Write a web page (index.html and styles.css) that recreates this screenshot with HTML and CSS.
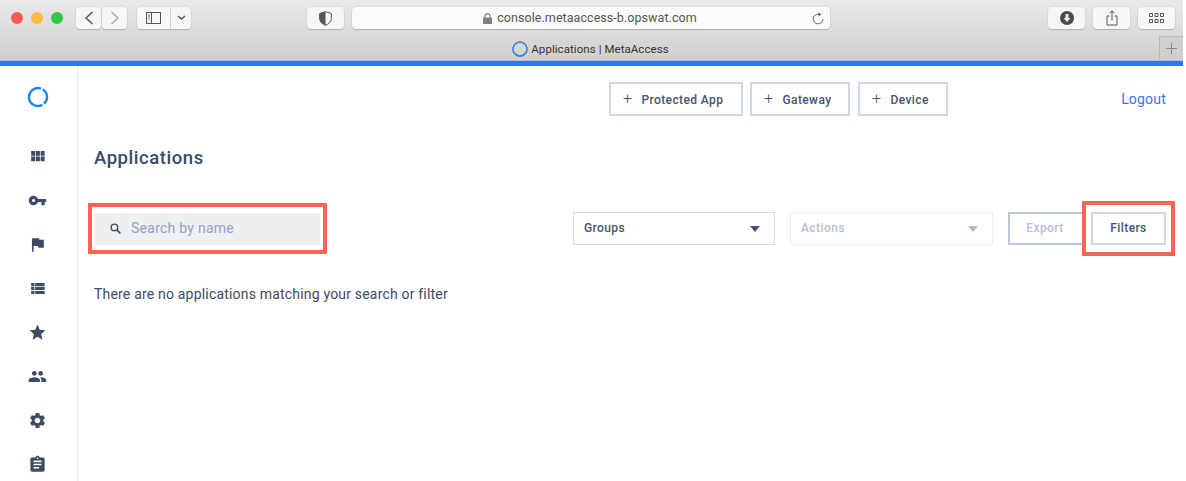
FILE: index.html
```html
<!DOCTYPE html>
<html lang="en">
<head>
<meta charset="utf-8">
<title>Applications | MetaAccess</title>
<link rel="stylesheet" href="styles.css">
</head>
<body>
<div class="browser">
  <header class="chrome">
    <div class="toolbar">
      <div class="lights"><i class="light red"></i><i class="light amber"></i><i class="light green"></i></div>
      <div class="nav-pair">
        <button class="tb tb-nav"><svg width="12" height="16" viewBox="0 0 12 16"><path d="M9.5 2 3 8l6.5 6" fill="none" stroke="#555" stroke-width="1.5"/></svg></button>
        <button class="tb tb-nav"><svg width="12" height="16" viewBox="0 0 12 16"><path d="M2.500 2 9 8l-6.500 6" fill="none" stroke="#aaa" stroke-width="1.500"/></svg></button>
      </div>
      <div class="tb tb-side">
        <span class="side-a"><svg width="16" height="12" viewBox="0 0 16 12"><rect x=".5" y=".5" width="14" height="11" fill="none" stroke="#555"/><path d="M5.500 .5v11" stroke="#555"/><path d="M2 3h2M2 5h2M2 7h2" stroke="#777"/></svg></span>
        <span class="side-b"><svg width="9" height="6" viewBox="0 0 9 6"><path d="M1 1l3.500 3L8 1" fill="none" stroke="#555" stroke-width="1.500"/></svg></span>
      </div>
      <button class="tb tb-shield"><svg width="13" height="15" viewBox="0 0 13 15"><path d="M6.500 .7 12.300 2.500V7.500C12.300 11 9.500 13.300 6.500 14.300 3.500 13.300.7 11 .7 7.500V2.500Z" fill="none" stroke="#555"/><path d="M6.500 .7V14.300C3.500 13.300.7 11 .7 7.500V2.500Z" fill="#555"/></svg></button>
      <div class="url">
        <span class="url-text"><svg class="lock" width="9" height="11" viewBox="0 0 9 11"><path d="M2 5V3.200a2.500 2.500 0 0 1 5 0V5" fill="none" stroke="#808080" stroke-width="1.200"/><rect y="4.500" width="9" height="6.500" rx=".6" fill="#808080"/></svg>console.metaaccess-b.opswat.com</span>
        <svg class="reload" width="12" height="13" viewBox="0 0 12 13"><path d="M7 2.300A4.800 4.800 0 1 0 10.800 7" fill="none" stroke="#666"/><path d="M6.500 .2 9.500 2.400 6.500 4.400Z" fill="#666"/></svg>
      </div>
      <button class="tb tb-act"><svg width="14" height="14" viewBox="0 0 14 14"><circle cx="7" cy="7" r="7" fill="#4a4a4a"/><path d="M5.500 3h3v4h2L7 11 3.500 7h2Z" fill="#eee"/></svg></button>
      <button class="tb tb-act"><svg width="12" height="16" viewBox="0 0 12 16"><path d="M3.500 6H1v9h10V6H8.500M6 10.500V1M3.500 3.200 6 .8l2.500 2.400" fill="none" stroke="#555"/></svg></button>
      <button class="tb tb-act"><svg width="15" height="10" viewBox="0 0 15 10"><path d="M.5.500h3v3h-3zM6 .500h3v3H6zM11.500.500h3v3h-3zM.5 6.500h3v3h-3zM6 6.500h3v3H6zM11.500 6.500h3v3h-3z" fill="none" stroke="#555"/></svg></button>
    </div>
    <div class="tabbar">
      <div class="tab-title"><svg width="16" height="16" viewBox="0 0 16 16"><path d="M10.500 1.500A7 7 0 1 1 5.500 1.500" fill="none" stroke="#2b7de0" stroke-width="1.500"/><path d="M5.500 1.500A7 7 0 0 1 10.500 1.500" fill="none" stroke="#5b6f90" stroke-width="1.500"/></svg><span>Applications | MetaAccess</span></div>
      <div class="tab-new"><svg width="13" height="13" viewBox="0 0 13 13"><path d="M6.500 1v11M1 6.500h11" stroke="#8a8a8a"/></svg></div>
    </div>
  </header>
  <div class="accent"></div>
  <div class="app">
    <aside class="sidebar">
      <svg class="logo" width="22" height="22" viewBox="0 0 22 22"><path d="M15.500 3.200A9 9 0 0 1 17 17.700M15.500 18.800A9 9 0 1 1 14.080 2.540" fill="none" stroke="#1d86ee" stroke-width="2.400"/></svg>
      <nav class="side-nav">
        <svg viewBox="0 0 24 24"><path d="M4 11h5V5H4v6zm0 7h5v-6H4v6zm6 0h5v-6h-5v6zm6 0h5v-6h-5v6zm-6-7h5V5h-5v6zm6-6v6h5V5h-5z"/></svg>
        <svg viewBox="0 0 24 24"><path d="M12.650 10C11.830 7.670 9.610 6 7 6c-3.310 0-6 2.690-6 6s2.690 6 6 6c2.610 0 4.830-1.670 5.650-4H17v4h4v-4h2v-4H12.650zM7 14c-1.100 0-2-.9-2-2s.9-2 2-2 2 .9 2 2-.9 2-2 2z"/></svg>
        <svg viewBox="0 0 24 24"><path d="M14.400 6L14 4H5v17h2v-7h5.600l.4 2h7V6z"/></svg>
        <svg viewBox="0 0 24 24"><path d="M4 14h4v-4H4v4zm0 5h4v-4H4v4zM4 9h4V5H4v4zm5 5h12v-4H9v4zm0 5h12v-4H9v4zM9 5v4h12V5H9z"/></svg>
        <svg viewBox="0 0 24 24"><path d="M12 17.270L18.180 21l-1.640-7.030L22 9.240l-7.190-.61L12 2 9.190 8.630 2 9.240l5.460 4.730L5.820 21z"/></svg>
        <svg viewBox="0 0 24 24"><path d="M16 11c1.660 0 2.990-1.340 2.990-3S17.660 5 16 5c-1.660 0-3 1.340-3 3s1.340 3 3 3zm-8 0c1.660 0 2.990-1.340 2.990-3S9.660 5 8 5C6.340 5 5 6.340 5 8s1.340 3 3 3zm0 2c-2.330 0-7 1.170-7 3.500V19h14v-2.500c0-2.330-4.670-3.500-7-3.500zm8 0c-.29 0-.62.02-.97.05 1.160.84 1.970 1.970 1.970 3.450V19h6v-2.500c0-2.330-4.670-3.500-7-3.500z"/></svg>
        <svg viewBox="0 0 24 24"><path d="M19.140 12.940c.04-.3.060-.61.060-.94 0-.32-.02-.64-.07-.94l2.030-1.580c.18-.14.230-.41.120-.61l-1.920-3.320c-.12-.22-.37-.29-.59-.22l-2.390.96c-.5-.38-1.030-.7-1.620-.94l-.36-2.540c-.04-.24-.24-.41-.48-.41h-3.840c-.24 0-.43.170-.47.410l-.36 2.540c-.59.240-1.130.570-1.620.940l-2.390-.96c-.22-.08-.47 0-.59.220L2.740 8.870c-.12.210-.08.470.120.610l2.030 1.580c-.05.300-.09.630-.09.940s.02.640.07.940l-2.030 1.580c-.18.140-.23.410-.12.610l1.920 3.320c.12.220.37.290.59.220l2.390-.96c.5.380 1.030.7 1.620.94l.36 2.540c.05.240.24.410.48.410h3.840c.24 0 .44-.17.47-.41l.36-2.540c.59-.24 1.130-.56 1.620-.94l2.390.96c.22.080.47 0 .59-.22l1.920-3.320c.12-.22.070-.47-.12-.61l-2.010-1.580zM12 15.600c-1.980 0-3.600-1.620-3.600-3.600s1.620-3.600 3.600-3.600 3.600 1.620 3.600 3.600-1.620 3.600-3.600 3.600z"/></svg>
        <svg viewBox="0 0 24 24"><path d="M19 3h-4.180C14.400 1.840 13.300 1 12 1c-1.300 0-2.400.84-2.820 2H5c-1.100 0-2 .9-2 2v14c0 1.100.9 2 2 2h14c1.100 0 2-.9 2-2V5c0-1.100-.9-2-2-2zm-7 0c.55 0 1 .45 1 1s-.45 1-1 1-1-.45-1-1 .45-1 1-1zm2 14H7v-2h7v2zm3-4H7v-2h10v2zm0-4H7V7h10v2z"/></svg>
      </nav>
    </aside>
    <main class="main">
      <div class="topbar">
        <button class="add add-app"><span class="plus">+</span>Protected App</button>
        <button class="add add-gw"><span class="plus">+</span>Gateway</button>
        <button class="add add-dev"><span class="plus">+</span>Device</button>
        <a class="logout">Logout</a>
      </div>
      <h1 class="title">Applications</h1>
      <div class="controls">
        <div class="search">
          <svg class="search-ico" viewBox="0 0 24 24"><circle cx="10" cy="10" r="6" fill="none" stroke="#3c4a63" stroke-width="2.500"/><path d="M14.500 14.500 21 21" stroke="#3c4a63" stroke-width="2.800"/></svg>
          <span>Search by name</span>
        </div>
        <div class="select select-groups">Groups<i class="caret"></i></div>
        <div class="select select-actions">Actions<i class="caret"></i></div>
        <button class="btn-export">Export</button>
        <button class="btn-filters">Filters</button>
      </div>
      <p class="empty">There are no applications matching your search or filter</p>
      <div class="mark mark-search"></div>
      <div class="mark mark-filters"></div>
    </main>
  </div>
</div>
</body>
</html>
```
FILE: styles.css
```css
* { box-sizing: border-box; }
html, body { margin: 0; height: 100%; background: #fff; overflow: hidden; }
body { font-family: Roboto, "Liberation Sans", sans-serif; color: #3c4a63; }
button { font-family: inherit; margin: 0; padding: 0; }
.browser { width: 1183px; height: 481px; display: flex; flex-direction: column; }

.chrome { height: 61px; background: linear-gradient(#e9e9e9, #cfcfcf); border-bottom: 1px solid #bdbdbd; flex: none; }
.toolbar { height: 36px; display: flex; align-items: flex-start; padding: 7px 0 0 11px; }
.lights { display: flex; gap: 8px; margin-top: 5px; width: 65px; }
.light { width: 12px; height: 12px; border-radius: 50%; display: block; }
.red { background: #fc5753; }
.amber { background: #fdbc40; }
.green { background: #33c748; }
.tb { height: 22px; background: #f6f6f6; border: 0; border-radius: 4px; box-shadow: 0 1px 1px #b0b0b0, 0 0 0 .5px #d4d4d4; display: flex; align-items: center; justify-content: center; }
.nav-pair { display: flex; gap: 1px; }
.tb-nav { width: 25px; }
.tb-side { width: 54px; margin-left: 10px; }
.side-a { width: 34px; height: 100%; border-right: 1px solid #d2d2d2; display: flex; align-items: center; justify-content: center; }
.side-b { width: 20px; display: flex; justify-content: center; }
.tb-shield { width: 37px; margin-left: 116px; }
.url { width: 478px; height: 22px; margin: 0 218px 0 8px; background: #fbfbfb; border-radius: 4px; box-shadow: 0 1px 1px #b0b0b0, 0 0 0 .5px #d4d4d4; display: flex; align-items: center; justify-content: center; font-size: 12.500px; letter-spacing: .06px; color: #555; position: relative; }
.url-text { display: flex; align-items: center; gap: 5px; margin-left: -2px; line-height: 22px; }
.reload { position: absolute; right: 6px; top: 5px; }
.tb-act { width: 37px; margin-right: 8px; }
.tabbar { height: 24px; display: flex; position: relative; justify-content: center; align-items: center; padding-top: 2px; }
.tab-title { display: flex; align-items: center; gap: 3px; font-size: 11.500px; letter-spacing: .06px; color: #333; margin-left: -2px; }
.tab-new { position: absolute; right: 0; top: 0; width: 24px; height: 24px; border: 1px solid #b8b8b8; border-width: 1px 0 0 1px; background: #d0d0d0; display: flex; align-items: center; justify-content: center; }
.accent { height: 5px; background: #2e78ee; flex: none; }

.app { flex: 1; display: flex; min-height: 0; }
.sidebar { width: 78px; border-right: 1px solid #ebebeb; display: flex; flex-direction: column; align-items: center; flex: none; padding-top: 20px; }
.logo { flex: none; margin-right: 2px; }
.side-nav { margin-top: 38.500px; margin-right: 2px; display: flex; flex-direction: column; gap: 25px; }
.side-nav svg { width: 19px; height: 19px; fill: #3c4a63; display: block; }

.main { flex: 1; padding: 16px 17px 0 16px; position: relative; }
.topbar { display: flex; align-items: center; height: 34px; padding-left: 515px; }
.add { height: 34px; background: #fff; border: 2px solid #d0d8e6; font-size: 12px; font-weight: 500; color: #46546c; letter-spacing: .4px; display: flex; align-items: center; justify-content: flex-start; padding: 2px 0 0 12px; }
.plus { font-size: 16px; font-weight: 300; margin: -2px 9px 0 0; line-height: 1; }
.add-app { width: 134px; margin-right: 7px; }
.add-gw { width: 100px; margin-right: 8px; }
.add-dev { width: 90px; }
.logout { margin-left: auto; font-size: 14px; color: #2e78ee; letter-spacing: .2px; }
.title { margin: 30px 0 0; font-size: 18.500px; line-height: 24px; font-weight: 500; letter-spacing: .55px; color: #3c4a63; }
.controls { display: flex; align-items: center; height: 33px; margin-top: 42px; }
.search { width: 225px; height: 32px; margin-left: 1px; background: #eeeff1; display: flex; align-items: center; padding: 0 0 1px 14px; font-size: 14px; color: #8fa4c4; letter-spacing: .26px; }
.search-ico { width: 13px; height: 13px; margin: 1px 9px 0 0; }
.select { height: 33px; font-size: 12px; font-weight: 500; letter-spacing: .4px; display: flex; align-items: center; justify-content: space-between; padding: 0 14px 1px 10px; background: #fff; color: #46546c; }
.select-groups { width: 202px; margin-left: 253px; border: 1px solid #d7dadf; }
.select-actions { width: 203px; margin-left: 15px; border: 1px solid #eceef1; color: #b4bfd0; }
.caret { width: 0; height: 0; margin-top: 2px; border: 5.500px solid transparent; border-top: 6px solid #46546c; border-bottom: 0; }
.select-actions .caret { border-top-color: #a9b9d2; }
.btn-export { width: 76px; height: 33px; margin-left: 15px; background: #fff; border: 2px solid #b8c6dc; font-size: 12px; font-weight: 500; letter-spacing: .4px; color: #b4c2d8; padding: 0 2px 1px 0; }
.btn-filters { width: 75px; height: 33px; margin-left: 7px; background: #fff; border: 2px solid #d0d8e6; font-size: 12px; font-weight: 500; letter-spacing: .4px; color: #46546c; padding-bottom: 1px; }
.empty { margin: 39px 0 0; font-size: 14px; line-height: 20px; letter-spacing: .19px; color: #3c4a63; }
.mark { position: absolute; border: 4px solid #fb6352; pointer-events: none; }
.mark-search { left: 10px; top: 137px; width: 239px; height: 51px; }
.mark-filters { left: 1004px; top: 135px; width: 93px; height: 55px; }
```
